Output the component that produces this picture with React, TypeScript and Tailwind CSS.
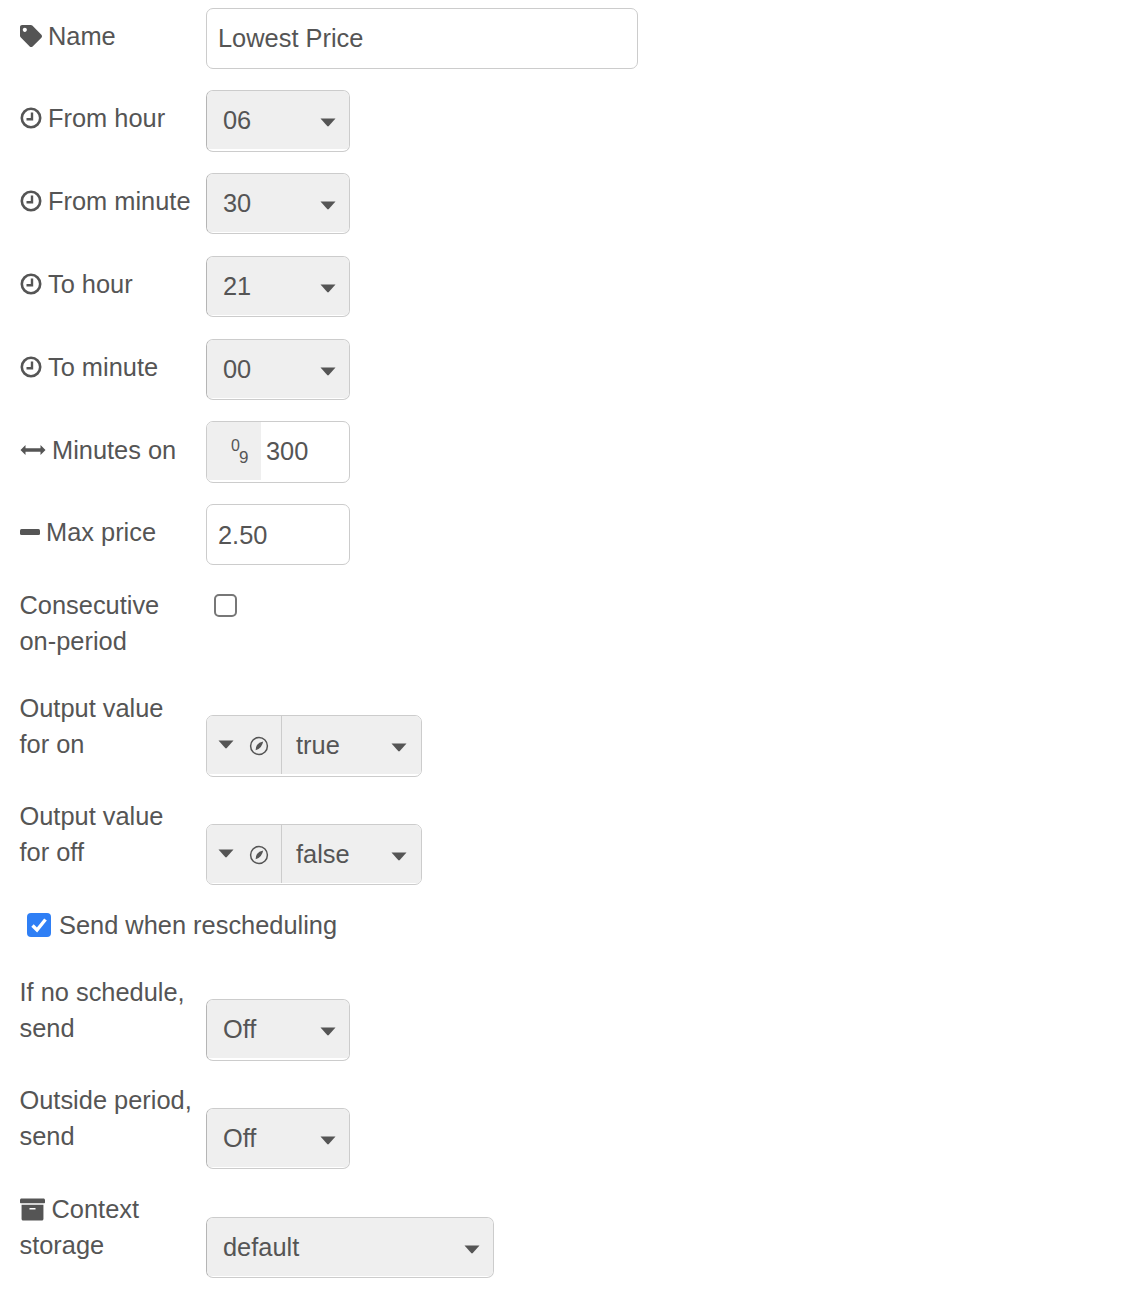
import React from 'react';
import { FaTag, FaArchive } from 'react-icons/fa';

// Little downward caret used by every select
const Caret = () => (
  <svg width="16" height="9" viewBox="0 0 16 9" className="shrink-0">
    <path d="M0.5 0.5H15.5L8.8 8Q8 8.8 7.2 8Z" fill="#555" />
  </svg>
);

const Clock = () => (
  <svg width="22" height="22" viewBox="0 0 22 22" className="shrink-0">
    <circle cx="11" cy="11" r="9.2" fill="none" stroke="#555" strokeWidth="2.6" />
    <path d="M12 5.5V12.2H6.5" fill="none" stroke="#555" strokeWidth="2.4" />
  </svg>
);

const Arrows = () => (
  <svg width="26" height="12" viewBox="0 0 26 12" className="shrink-0">
    <path d="M5.5 4.3H20.5V1L25.5 6L20.5 11V7.7H5.5V11L0.5 6L5.5 1Z" fill="#555" />
  </svg>
);

const Dash = () => (
  <svg width="20" height="6" viewBox="0 0 20 6" className="shrink-0">
    <rect width="20" height="6" rx="1.5" fill="#555" />
  </svg>
);

const Dial = () => (
  <svg width="20" height="20" viewBox="0 0 20 20" className="shrink-0">
    <circle cx="10" cy="10" r="8.4" fill="none" stroke="#555" strokeWidth="1.5" />
    <path d="M14.2 5.6Q9.8 6.4 8 9Q6.6 11.2 6.6 14.2Q10 13.4 11.8 11Q13.6 8.8 14.2 5.6Z" fill="#555" />
  </svg>
);

const Select = ({ value, width, height = 'h-[61px]' }: { value: string; width: string; height?: string }) => (
  <div className={`${width} ${height} rounded-[7px] border border-[#ccc] border-l-[#b5b5b5] bg-white overflow-hidden`}>
    <div className="h-[58px] bg-[#efefef] flex items-center justify-between pl-[16px] pr-[13px]">
      <span>{value}</span>
      <span className="flex pt-[5px]"><Caret /></span>
    </div>
  </div>
);

const TypedSelect = ({ value, height }: { value: string; height: string }) => (
  <div className={`w-[216px] ${height} rounded-[7px] border border-[#ccc] bg-white overflow-hidden`}>
    <div className="h-[58px] bg-[#efefef] flex items-center">
      <div className="w-[75px] h-full border-r border-[#ccc] flex items-center gap-[15px] pl-[11px]">
        <span className="flex pb-[2px]"><Caret /></span>
        <span className="flex pt-[2px]"><Dial /></span>
      </div>
      <div className="flex-1 flex items-center justify-between pl-[14px] pr-[14px]">
        <span>{value}</span>
        <span className="flex pt-[4px]"><Caret /></span>
      </div>
    </div>
  </div>
);

const Label = ({ icon, top = 'pt-[10px]', children }: { icon?: React.ReactNode; top?: string; children: React.ReactNode }) => (
  <div className={`w-[186.5px] h-[46px] shrink-0 ${top} flex items-center gap-[6.5px]`}>
    {icon}
    <span className="whitespace-nowrap">{children}</span>
  </div>
);

const timeRows = [
  { label: 'From hour', value: '06', height: 'h-[62px]', margin: 'mb-[21px]' },
  { label: 'From minute', value: '30', height: 'h-[61px]', margin: 'mb-[22px]' },
  { label: 'To hour', value: '21', height: 'h-[61px]', margin: 'mb-[22px]' },
  { label: 'To minute', value: '00', height: 'h-[61px]', margin: 'mb-[21px]' },
];

export default function App() {
  return (
    <div className="bg-white min-h-[1292px] pt-[8px] pl-[19.5px] text-[25.4px] leading-[36px] text-[#555] font-['Liberation_Sans',Arial,sans-serif]">
      {/* Name */}
      <div className="flex mb-[21px]">
        <Label icon={<FaTag size={22} className="shrink-0" />}>Name</Label>
        <div className="w-[432px] h-[61px] rounded-[7px] border border-[#ccc] pl-[11px] pb-[1px] flex items-center">Lowest Price</div>
      </div>

      {/* Time selects */}
      {timeRows.map((r) => (
        <div key={r.label} className={`flex ${r.margin}`}>
          <Label icon={<Clock />}>{r.label}</Label>
          <Select value={r.value} width="w-[144px]" height={r.height} />
        </div>
      ))}

      {/* Minutes on */}
      <div className="flex mb-[21px]">
        <Label icon={<Arrows />} top="pt-[12px]">Minutes on</Label>
        <div className="w-[144px] h-[62px] rounded-[7px] border border-[#ccc] overflow-hidden flex">
          <div className="relative w-[54px] h-[58px] bg-[#efefef] text-[16px] leading-[16px]">
            <span className="absolute left-[24px] top-[16px]">0</span>
            <span className="absolute left-[32px] top-[28px] text-[17px]">9</span>
          </div>
          <div className="pl-[5px] pt-[11px]">300</div>
        </div>
      </div>

      {/* Max price */}
      <div className="flex mb-[22px]">
        <Label icon={<Dash />}>Max price</Label>
        <div className="w-[144px] h-[61px] rounded-[7px] border border-[#ccc] pl-[11px] pt-[12px]">2.50</div>
      </div>

      {/* Consecutive */}
      <div className="flex h-[103px]">
        <div className="w-[186.5px] shrink-0">Consecutive<br />on-period</div>
        <div className="ml-[8px] mt-[7px] w-[23px] h-[23px] rounded-[5px] border-2 border-[#777] bg-white" />
      </div>

      {/* Outputs */}
      <div className="flex h-[108px]">
        <div className="w-[186.5px] shrink-0">Output value<br />for on</div>
        <div className="mt-[25px]"><TypedSelect value="true" height="h-[62px]" /></div>
      </div>
      <div className="flex h-[109px]">
        <div className="w-[186.5px] shrink-0">Output value<br />for off</div>
        <div className="mt-[26px]"><TypedSelect value="false" height="h-[61px]" /></div>
      </div>

      {/* Send when rescheduling */}
      <div className="flex items-center gap-[8px] pl-[7.5px] h-[36px] mb-[31px]">
        <div className="w-[24px] h-[24px] rounded-[4px] bg-[#2f7ff5] flex items-center justify-center">
          <svg width="20" height="20" viewBox="0 0 20 20">
            <path d="M3.5 10.5L8 15L16.5 4.5" fill="none" stroke="white" strokeWidth="3.4" />
          </svg>
        </div>
        <span>Send when rescheduling</span>
      </div>

      {/* Fallbacks */}
      <div className="flex h-[108px]">
        <div className="w-[186.5px] shrink-0">If no schedule,<br />send</div>
        <div className="mt-[25px]"><Select value="Off" width="w-[144px]" height="h-[62px]" /></div>
      </div>
      <div className="flex h-[109px]">
        <div className="w-[186.5px] shrink-0 whitespace-nowrap">Outside period,<br />send</div>
        <div className="mt-[26px]"><Select value="Off" width="w-[144px]" /></div>
      </div>

      {/* Context storage */}
      <div className="flex">
        <div className="w-[186.5px] shrink-0">
          <div className="flex items-center gap-[7px]"><FaArchive size={25} className="shrink-0" />Context</div>
          storage
        </div>
        <div className="mt-[26px]"><Select value="default" width="w-[288px]" /></div>
      </div>
    </div>
  );
}
